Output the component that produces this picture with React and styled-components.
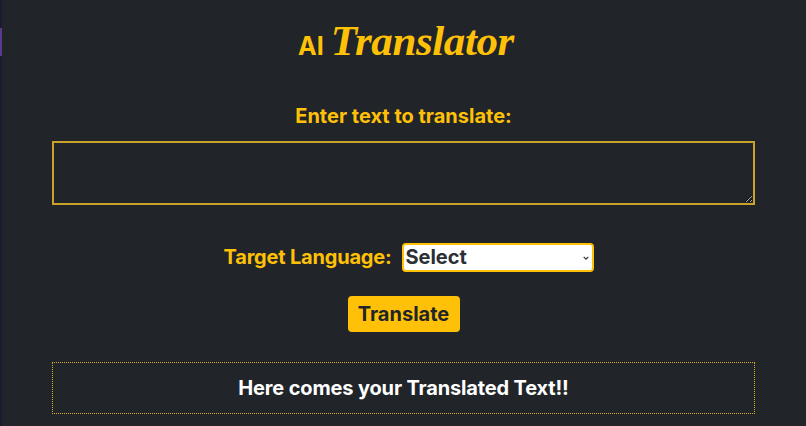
import styled, { createGlobalStyle } from 'styled-components'

const chevron = encodeURIComponent(
  '<svg xmlns="http://www.w3.org/2000/svg" width="6" height="4" viewBox="0 0 6 4"><path d="M0.7 0.8 L3 3.1 L5.3 0.8" fill="none" stroke="#333" stroke-width="1.2"/></svg>'
)

const GlobalStyle = createGlobalStyle`
  html, body {
    margin: 0;
    padding: 0;
    height: 100%;
    overflow: hidden;
    background-color: #212529;
  }
  body {
    font-family: Inter, "Liberation Sans", sans-serif;
  }
`

export default function App() {
  return (
    <Page>
      <GlobalStyle />
      <Edge />
      <Title>
        <Small>AI</Small>
        <Script>Translator</Script>
      </Title>
      <Label htmlFor="source">Enter text to translate:</Label>
      <TextArea id="source" />
      <LanguageRow>
        <RowLabel htmlFor="lang">Target Language:</RowLabel>
        <Select id="lang" defaultValue="">
          <option value="">Select</option>
          <option value="es">Spanish</option>
          <option value="fr">French</option>
        </Select>
      </LanguageRow>
      <Button type="button">Translate</Button>
      <Output>Here comes your Translated Text!!</Output>
    </Page>
  )
}

const Page = styled.div`
  height: 426px;
  box-sizing: border-box;
  padding: 11px 51px 0 52px;
  display: flex;
  flex-direction: column;
  align-items: center;
  background-color: #212529;
`
const Edge = styled.div`
  position: fixed;
  left: 0;
  top: 0;
  bottom: 0;
  width: 2px;
  background: linear-gradient(
    to bottom,
    #1f1a33 0 28px,
    #5a3a8c 28px 56px,
    #1f1a33 56px
  );
`
const Title = styled.h1`
  margin: 0;
  height: 58px;
  padding-left: 5px;
  display: flex;
  align-items: baseline;
  justify-content: center;
  gap: 7px;
  color: #ffc107;
`
const Small = styled.span`
  font-size: 25px;
  font-weight: 700;
`
const Script = styled.span`
  font-family: "Liberation Serif", serif;
  font-style: italic;
  font-size: 43px;
  font-weight: 700;
  line-height: 60px;
  letter-spacing: -0.4px;
`
const Label = styled.label`
  margin-top: 34px;
  line-height: 26px;
  font-size: 20px;
  font-weight: 700;
  color: #ffc107;
`
const TextArea = styled.textarea`
  display: block;
  width: 100%;
  height: 64px;
  margin-top: 12px;
  box-sizing: border-box;
  background-color: #212529;
  border: 2px solid #c9a227;
  color: #fff;
  outline: none;
`
const LanguageRow = styled.div`
  display: flex;
  align-items: center;
  gap: 11px;
  margin-top: 38px;
  padding-left: 11px;
`
const RowLabel = styled.label`
  margin-bottom: 1px;
  font-size: 20px;
  font-weight: 700;
  letter-spacing: -0.2px;
  color: #ffc107;
`
const Select = styled.select`
  appearance: none;
  width: 192px;
  height: 29px;
  box-sizing: border-box;
  padding: 0 0 2px 1px;
  background: #fff url("data:image/svg+xml,${chevron}") no-repeat right 3px center;
  border: 2px solid #ffc107;
  border-radius: 4px;
  color: #2b2f36;
  font-family: Inter, "Liberation Sans", sans-serif;
  font-size: 20px;
  font-weight: 700;
`
const Button = styled.button`
  width: 112px;
  height: 36px;
  margin-top: 24px;
  padding: 0;
  background-color: #ffc107;
  border: none;
  border-radius: 4px;
  color: #212529;
  font-family: Inter, "Liberation Sans", sans-serif;
  font-size: 20px;
  font-weight: 700;
`
const Output = styled.div`
  width: 100%;
  height: 52px;
  margin-top: 30px;
  box-sizing: border-box;
  display: flex;
  align-items: center;
  justify-content: center;
  border: 1px dotted #d9ae1e;
  color: #fff;
  font-size: 20px;
  font-weight: 700;
  letter-spacing: -0.15px;
`
